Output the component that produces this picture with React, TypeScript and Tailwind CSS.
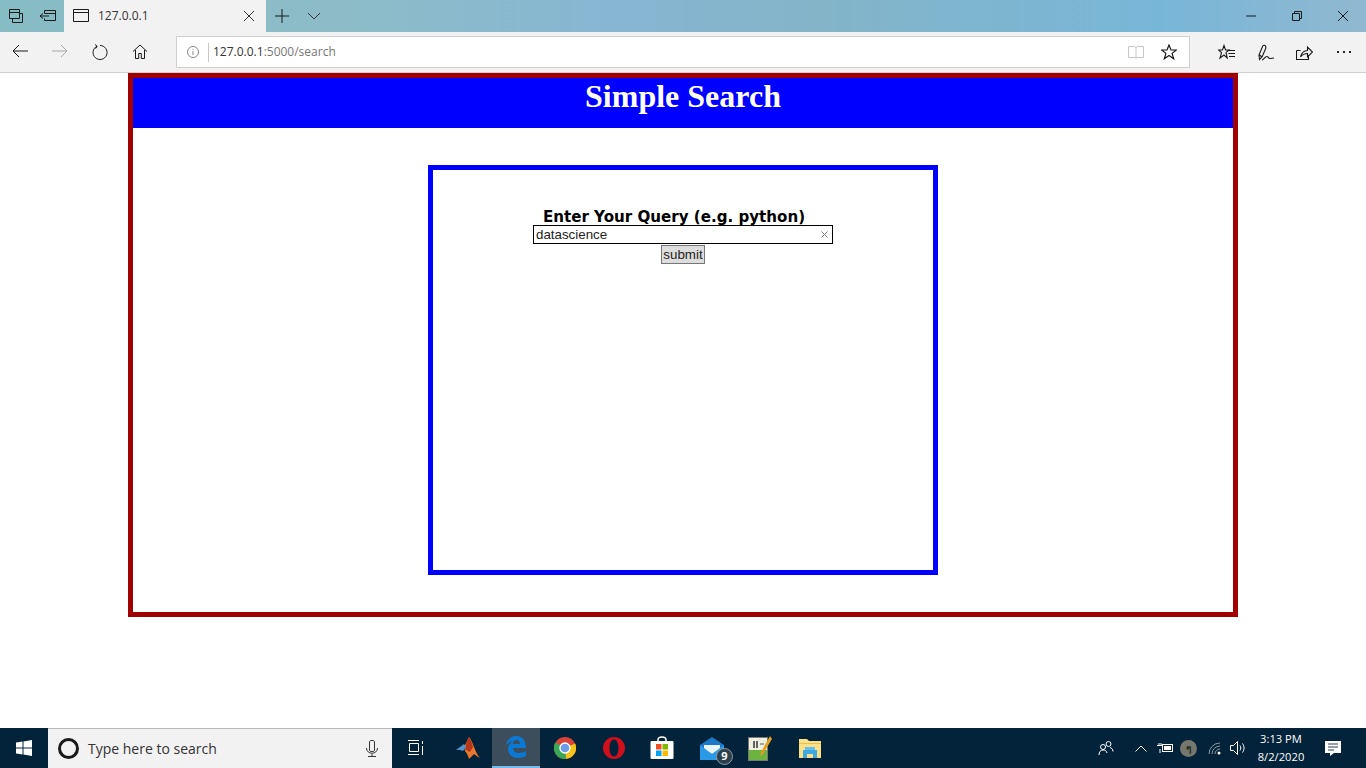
import React from "react";

const seg = "font-['Open_Sans','Noto_Sans',sans-serif]";

function Stroke({ w = 20, h = 20, vb = "0 0 20 20", color = "#1a1a1a", sw = 1, children }: { w?: number; h?: number; vb?: string; color?: string; sw?: number; children: React.ReactNode }) {
  return (
    <svg width={w} height={h} viewBox={vb} fill="none" stroke={color} strokeWidth={sw}>
      {children}
    </svg>
  );
}

function TitleBar() {
  return (
    <div className="flex h-8 bg-[linear-gradient(90deg,#86bcc4_0%,#8dbcc8_25%,#86b6d2_45%,#83b4c8_60%,#78b6d8_85%,#90b8d0_100%)]">
      <div className="flex w-[64px] items-center">
        <div className="flex w-8 justify-center">
          <Stroke w={16} h={16} vb="0 0 16 16">
            <path d="M1.5 1.5h10v9h-10zM1.5 4.5h10M4.5 10.5v4h10v-9h-3M4.5 7.5h0" />
          </Stroke>
        </div>
        <div className="flex w-8 justify-center">
          <Stroke w={18} h={16} vb="0 0 18 16">
            <path d="M5.5 2.5h11v10h-11v-2M5.5 5.5v-3M5.5 5.5h11M1 8h9M4 5.5 1 8l3 2.5" />
          </Stroke>
        </div>
      </div>
      <div className="flex w-[202px] items-center bg-[#f2f2f2] pl-[9px] pr-[11px]">
        <Stroke w={17} h={14} vb="0 0 17 14">
          <path d="M.5.5h15v12H.5zM.5 3.5h15" />
        </Stroke>
        <span className={`ml-[8px] flex-1 text-[12px] text-[#333] ${seg}`}>127.0.0.1</span>
        <Stroke w={12} h={12} vb="0 0 12 12" color="#333">
          <path d="M1 1l10 10M11 1 1 11" />
        </Stroke>
      </div>
      <div className="flex w-[32px] items-center justify-center">
        <Stroke w={14} h={14} vb="0 0 14 14">
          <path d="M7 0v14M0 7h14" />
        </Stroke>
      </div>
      <div className="flex w-[32px] items-center justify-center">
        <Stroke w={14} h={8} vb="0 0 14 8" color="#333">
          <path d="M1 1l6 6 6-6" />
        </Stroke>
      </div>
      <div className="flex-1" />
      <div className="flex">
        <div className="flex w-[46px] items-center justify-center">
          <Stroke w={10} h={2} vb="0 0 10 2"><path d="M0 1h10" /></Stroke>
        </div>
        <div className="flex w-[46px] items-center justify-center">
          <Stroke w={10} h={10} vb="0 0 10 10"><path d="M.5 2.5h7v7h-7zM2.5 2.5v-2h7v7h-2" /></Stroke>
        </div>
        <div className="flex w-[46px] items-center justify-center">
          <Stroke w={10} h={10} vb="0 0 10 10"><path d="M0 0l10 10M10 0 0 10" /></Stroke>
        </div>
      </div>
    </div>
  );
}

function Toolbar() {
  return (
    <div className="flex h-[41px] items-center border-b border-[#cfcfcf] bg-[#f2f2f2]">
      <div className="flex w-[176px]">
        <div className="flex w-10 justify-center">
          <Stroke w={16} h={14} vb="0 0 16 14"><path d="M16 7H1M7 1 1 7l6 6" /></Stroke>
        </div>
        <div className="flex w-10 justify-center">
          <Stroke w={16} h={14} vb="0 0 16 14" color="#a8a8a8"><path d="M0 7h15M9 1l6 6-6 6" /></Stroke>
        </div>
        <div className="flex w-[40px] justify-center">
          <Stroke w={16} h={16} vb="0 0 16 16"><path d="M5 2.2a7 7 0 1 0 3-.7M3 .5l2.2 1.8L3.6 4.6" /></Stroke>
        </div>
        <div className="flex w-[40px] justify-center">
          <Stroke w={16} h={15} vb="0 0 16 15"><path d="M1 7.5 8 1l7 6.5M3.5 6v8.5h3.2v-5h2.600v5h3.2V6" /></Stroke>
        </div>
      </div>
      <div className="flex h-8 w-[1014px] items-center border border-[#d0d0d0] bg-white pl-[10px] pr-[12px]">
        <Stroke w={12} h={12} vb="0 0 12 12" color="#888">
          <circle cx="6" cy="6" r="5.500" />
          <path d="M6 5v4M6 3v1" />
        </Stroke>
        <div className="ml-[9px] mr-[4px] h-[19px] w-px bg-[#c8c8c8]" />
        <span className={`flex-1 text-[12px] text-[#333] ${seg}`}>
          127.0.0.1<span className="text-[#777]">:5000/search</span>
        </span>
        <Stroke w={16} h={14} vb="0 0 16 14" color="#c8c8c8">
          <path d="M.5 1.500h5.500c1 0 2 .6 2 1.600V13.500M15.500 1.500H10c-1 0-2 .6-2 1.600M.5 1.500v11h7.500M15.500 1.500v11H8" />
        </Stroke>
        <div className="ml-[17px]">
          <Stroke w={16} h={16} vb="0 0 16 16" sw={1.2}>
            <path d="M8 1l2 5h5.300l-4.200 3.400 1.600 5.400L8 11.600l-4.700 3.200 1.600-5.400L.7 6H6z" />
          </Stroke>
        </div>
      </div>
      <div className="ml-[17px] flex items-center">
        <div className="flex w-[39px] justify-center">
          <Stroke w={17} h={16} vb="0 0 17 16" sw={1.1}>
            <path d="M6 1.500 7.500 6H11L8 8.600 9.200 14 6 11 2 14 3.500 8.600 .5 6H4.500zM10 6.500h7M10.500 9.500h6.500M11 12.500h6" />
          </Stroke>
        </div>
        <div className="flex w-[39px] justify-center">
          <Stroke w={16} h={17} vb="0 0 16 17" sw={1.1}>
            <path d="M1.500 15.500 1 11 4.500 2.500C5 1 7 1 7.500 2c.5 1 .5 2 0 3L4 13zM1.500 11 4 13M4 16c2 0 3-4 5-3.500s1 2 3 2 2-.5 4-.5" />
          </Stroke>
        </div>
        <div className="flex w-[39px] justify-center">
          <Stroke w={17} h={15} vb="0 0 17 15" sw={1.1}>
            <path d="M.5 5.500v9h12V10M.5 5.500h4M4.500 12c1-4 4-6.500 7-6.500V2l5 5-5 5V8.500c-3 0-5 1-7 3.500z" />
          </Stroke>
        </div>
        <div className="flex w-[39px] justify-center gap-[4px]">
          <span className="h-[2px] w-[2px] bg-[#222]" />
          <span className="h-[2px] w-[2px] bg-[#222]" />
          <span className="h-[2px] w-[2px] bg-[#222]" />
        </div>
      </div>
    </div>
  );
}

function SearchPage() {
  return (
    <div className="flex h-[655px] justify-center bg-white">
      <div className="h-[544px] w-[1110px] border-[5px] border-[#a00000]">
        <div className="h-[50px] bg-[#0000ff] text-center font-['Liberation_Serif',serif] text-[32px] font-bold leading-[37px] text-white">
          Simple Search
        </div>
        <div className="flex justify-center pt-[37px]">
          <div className="flex h-[410px] w-[510px] flex-col items-center border-[5px] border-[#0000ff] pt-[39px]">
            <div className="ml-[-18px] font-['DejaVu_Sans',sans-serif] text-[15.100px] font-bold leading-[16px] text-black">
              Enter Your Query (e.g. python)
            </div>
            <div className="flex h-[19px] w-[300px] items-center border border-black pl-[2px] pr-[4px] font-['Liberation_Sans',sans-serif] text-[13.330px] text-[#222]">
              <span className="flex-1">datascience</span>
              <Stroke w={7} h={7} vb="0 0 7 7" color="#777"><path d="M.5.5l6 6M6.500.5l-6 6" /></Stroke>
            </div>
            <button className="mt-[1px] h-[19px] w-[44px] border border-[#767676] bg-[#dddddd] font-['Liberation_Sans',sans-serif] text-[13.330px] leading-[15px] text-[#222]">
              submit
            </button>
          </div>
        </div>
      </div>
    </div>
  );
}

function AppIcons() {
  return (
    <div className="flex">
      <div className="flex w-[48px] items-center justify-center">
        <Stroke w={16} h={16} vb="0 0 16 16" color="#fff">
          <path d="M0 .5h11M1.500 3.500h9v8h-9zM0 14.500h11M14.500 1v3M14.500 6v9" />
        </Stroke>
      </div>
      <div className="ml-[4px] flex w-[48px] items-center justify-center">
        <svg width="24" height="22" viewBox="0 0 24 22">
          <path d="M13 0c2 2 3 5 5 10s4 9 6 11c-3-1-4-3-6-4-1 1-3 3-5 5-1-3-2-6-4-8l-1-5c2-1 3-6 5-9z" fill="#e8792e" />
          <path d="M13 0c-2 3-3 7-4 12 1 1 3 2 5 3l3-5c-1-4-2-7-4-10z" fill="#b5361a" />
          <path d="M0 13l8-6 2 3-3 4-3-1z" fill="#4f94cc" />
        </svg>
      </div>
      <div className="flex w-[48px] items-center justify-center border-b-2 border-[#76b9ed] bg-[#3c4d5b]">
        <svg width="20" height="22" viewBox="0 0 20 22">
          <path fillRule="evenodd" d="M0 9C1 3 6 0 10 0c6 0 10 4 10 12H7c0 3 3 5 6 5 2 0 5-1 7-2v5c-2 1-5 2-8 2-6 0-10-4-10-9 0-3 2-6 5-8-3 1-5 2-7 4zM7 8h7c0-2-1-4-3.500-4S7 6 7 8z" fill="#0a78d4" />
        </svg>
      </div>
      <div className="flex w-[50px] items-center justify-center">
        <svg width="22" height="22" viewBox="0 0 24 24">
          <circle cx="12" cy="12" r="12" fill="#d9433a" />
          <path d="M12 12 23 7a12 12 0 0 1-10 17z" fill="#f5c518" />
          <path d="M12 12 13 24A12 12 0 0 1 1.500 6z" fill="#3aa757" />
          <circle cx="12" cy="12" r="5.500" fill="#6b9ce8" stroke="#fff" strokeWidth="1.500" />
        </svg>
      </div>
      <div className="flex w-[48px] items-center justify-center">
        <svg width="22" height="22" viewBox="0 0 22 22">
          <path fillRule="evenodd" d="M11 0a11 11 0 1 1 0 22 11 11 0 0 1 0-22zM11 2.500c-2.500 0-4.500 3.500-4.500 8.500s2 8.500 4.500 8.500 4.500-3.500 4.500-8.500-2-8.500-4.500-8.500z" fill="#cf0f1c" />
        </svg>
      </div>
      <div className="flex w-[48px] items-center justify-center">
        <svg width="24" height="24" viewBox="0 0 24 24">
          <path d="M8 6V4c0-4 8-4 8 0v2" fill="none" stroke="#fff" strokeWidth="1.500" />
          <rect x=".5" y="5" width="23" height="18" rx="1" fill="#fff" />
          <rect x="6" y="8" width="5.500" height="5.500" fill="#f25022" />
          <rect x="12.500" y="8" width="5.500" height="5.500" fill="#7fba00" />
          <rect x="6" y="14.500" width="5.500" height="5.500" fill="#00a4ef" />
          <rect x="12.500" y="14.500" width="5.500" height="5.500" fill="#ffb900" />
        </svg>
      </div>
      <div className="relative flex w-[50px] items-center justify-center pl-[2px]">
        <svg width="24" height="23" viewBox="0 0 24 23">
          <path d="M0 8 12 0l12 8v15H0z" fill="#1c78c8" />
          <path d="M4 8h16v5l-8 4-8-4z" fill="#eaf5fc" />
          <path d="M0 8l12 9 12-9v15H0z" fill="#2a9ae6" />
        </svg>
        <span className={`absolute left-[30px] top-[20px] flex h-[17px] w-[17px] items-center justify-center rounded-full border border-[#8a99a5] bg-[#2d3f4d] text-[11px] font-bold text-white ${seg}`}>
          9
        </span>
      </div>
      <div className="flex w-[48px] items-center justify-center">
        <svg width="24" height="25" viewBox="0 0 24 25">
          <rect x=".5" y="1.500" width="19" height="23" fill="#f0f0e0" stroke="#777" />
          <rect x="1" y="14" width="18" height="10" fill="#6db33f" />
          <path d="M6 5v7M9 5v7" stroke="#333" strokeWidth="1.500" />
          <path d="M12 8h4" stroke="#555" />
          <path d="M22 0 13 16l-1 4 3-2 9-15z" fill="#e0a020" />
        </svg>
      </div>
      <div className="flex w-[52px] items-center justify-center">
        <svg width="22" height="19" viewBox="0 0 22 19">
          <path d="M0 0h8l2 2h12v17H0z" fill="#fbe08a" />
          <path d="M0 4h22v1H0z" fill="#e8c050" />
          <path d="M4 11h14v8h-4v-4H8v4H4z" fill="#3fa8e0" />
          <path d="M6 8h10v3H6z" fill="#62c0f0" />
        </svg>
      </div>
    </div>
  );
}

function Tray() {
  return (
    <div className="flex items-center">
      <div className="mr-[21px]">
        <Stroke w={16} h={16} vb="0 0 16 16" color="#fff">
          <circle cx="10.500" cy="4" r="2.500" />
          <circle cx="5" cy="7" r="2.500" />
          <path d="M1 15c0-3 1.500-5 4-5s3.500 1 4 3M12 7.500c1.500.5 3 1.500 3 4" />
        </Stroke>
      </div>
      <div className="mr-[10px]">
        <Stroke w={12} h={7} vb="0 0 12 7" color="#fff"><path d="M.5 6.500 6 1l5.500 5.500" /></Stroke>
      </div>
      <div className="mr-[6px]">
        <svg width="17" height="10" viewBox="0 0 17 10" fill="none" stroke="#fff">
          <rect x="5.500" y="1.500" width="10" height="7" />
          <rect x="7" y="3" width="7" height="4" fill="#fff" stroke="none" />
          <path d="M2 0v2M4 0v2M0 2.500h5.500M3 6v4" />
        </svg>
      </div>
      <div className="mr-[11px] flex h-[17px] w-[17px] items-center justify-center rounded-full bg-[#75776c] text-[10px] font-bold leading-none text-[#1e2a20]">
        ๆ
      </div>
      <div className="mr-[8px]">
        <svg width="14" height="14" viewBox="0 0 14 14" fill="none" stroke="#8a97a0">
          <path d="M1 13A11 11 0 0 1 12 2M4 13a8 8 0 0 1 8-8M7 13a5 5 0 0 1 5-5" />
          <circle cx="11" cy="12" r="1.500" fill="#fff" stroke="none" />
        </svg>
      </div>
      <div className="mr-[3px]">
        <Stroke w={17} h={14} vb="0 0 17 14" color="#fff">
          <path d="M.5 4.500h3l4-4v13l-4-4h-3zM10 4.500c1 1.500 1 3.500 0 5M12.500 2.500c2 3 2 6 0 9" />
        </Stroke>
      </div>
      <div className={`w-[62px] text-center text-[11.200px] leading-[18px] text-white ${seg}`}>
        <div>3:13 PM</div>
        <div>8/2/2020</div>
      </div>
      <div className="ml-[13px] mr-[24px]">
        <svg width="17" height="17" viewBox="0 0 17 17">
          <path d="M0 1h16v12H9l-4 3v-3H0z" fill="#fff" />
          <path d="M3 4h10M3 7h10M3 10h6" stroke="#2a3f50" />
        </svg>
      </div>
    </div>
  );
}

function Taskbar() {
  return (
    <div className="flex h-10 bg-[#03233a]">
      <div className="flex w-12 items-center justify-center">
        <svg width="16" height="16" viewBox="0 0 16 16" fill="#fff">
          <path d="M0 2.500 6.500 1.500V7.500H0zM7.500 1.400 16 0V7.500H7.500zM0 8.500H6.500V14.500L0 13.500zM7.500 8.500H16V16L7.500 14.600z" />
        </svg>
      </div>
      <div className="flex w-[344px] items-center border-t border-[#b8b8b8] bg-[#f2f2f2] pl-[10px] pr-[14px]">
        <div className="h-[21px] w-[21px] rounded-full border-[3px] border-[#1a1a1a]" />
        <span className={`ml-[9px] flex-1 text-[14px] text-[#333] ${seg}`}>Type here to search</span>
        <Stroke w={12} h={17} vb="0 0 12 17" color="#333">
          <path d="M3.500 1.500a2.500 1 0 0 1 5 0v9a2.500 1 0 0 1-5 0zM.5 8c0 7 11 7 11 0M6 14v2.500M2 16.500h8" />
        </Stroke>
      </div>
      <AppIcons />
      <div className="flex-1" />
      <Tray />
    </div>
  );
}

export default function App() {
  return (
    <div className="flex h-[768px] w-[1366px] flex-col overflow-hidden bg-white">
      <TitleBar />
      <Toolbar />
      <SearchPage />
      <Taskbar />
    </div>
  );
}
